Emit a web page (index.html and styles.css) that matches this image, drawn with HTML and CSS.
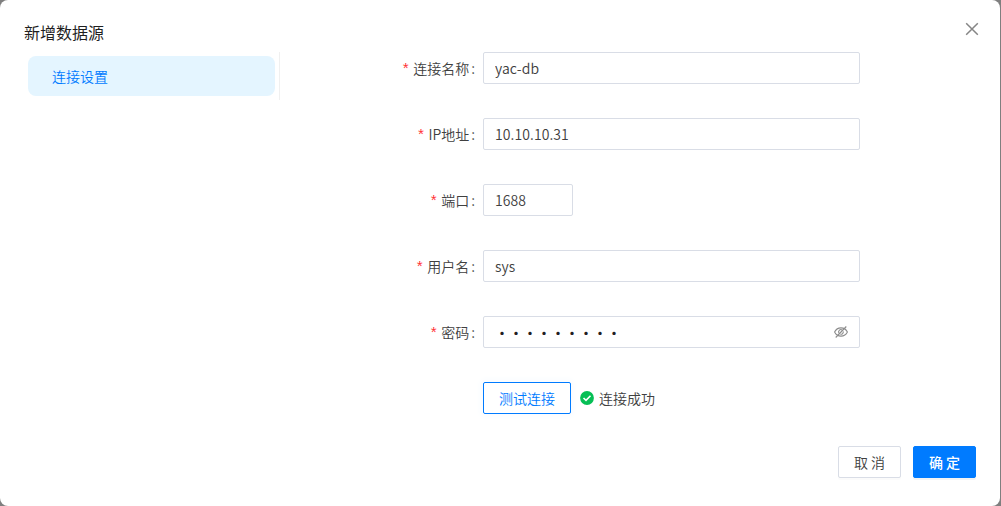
FILE: index.html
```html
<!DOCTYPE html>
<html lang="zh-CN">

<head>
    <meta charset="UTF-8">
    <meta name="viewport" content="width=device-width, initial-scale=1.0">
    <title>新增数据源</title>
    <link rel="stylesheet" href="styles.css">
</head>

<body>
    <div class="modal">
        <div class="header">
            <div class="title">新增数据源</div>
            <svg class="close" viewBox="0 0 14 14">
                <path d="M1.2 1.2l11.6 11.6M12.8 1.2L1.2 12.8" />
            </svg>
        </div>
        <div class="content">
            <div class="side">
                <div class="menu-item">连接设置</div>
            </div>
            <form class="form">
                <div class="row">
                    <label class="label" for="name">连接名称</label>
                    <input class="input" type="text" id="name" value="yac-db">
                </div>
                <div class="row">
                    <label class="label" for="ip">IP地址</label>
                    <input class="input" type="text" id="ip" value="10.10.10.31">
                </div>
                <div class="row">
                    <label class="label" for="port">端口</label>
                    <input class="input port" type="text" id="port" value="1688">
                </div>
                <div class="row">
                    <label class="label" for="user">用户名</label>
                    <input class="input" type="text" id="user" value="sys">
                </div>
                <div class="row">
                    <label class="label">密码</label>
                    <div class="input password">
                        <span class="dots">・・・・・・・・・</span>
                        <svg class="eye" viewBox="0 0 14 14">
                            <path d="M.6 7C3.3 1.500 10.700 1.500 13.400 7C10.700 12.500 3.300 12.500 .600 7z" />
                            <path d="M5 8.200A2.300 2.300 0 0 1 8.200 5M9.200 6.400A2.300 2.300 0 0 1 6.400 9.200" />
                            <path d="M1.700 12.500L12.300 1.500" />
                        </svg>
                    </div>
                </div>
                <div class="test">
                    <button class="btn test-btn" type="button">测试连接</button>
                    <svg class="success" viewBox="0 0 14 14">
                        <circle cx="7" cy="7" r="6.900" />
                        <path d="M3.500 7l2.500 2.400l4.500-4.700" />
                    </svg>
                    <span>连接成功</span>
                </div>
            </form>
        </div>
        <div class="footer">
            <button class="btn" type="button">取 消</button>
            <button class="btn primary" type="button">确 定</button>
        </div>
    </div>
</body>

</html>
```
FILE: styles.css
```css
* {
    box-sizing: border-box;
}
body {
    margin: 0;
    background-color: #7f7f7f;
    color: #404040;
    font-family: "Noto Sans CJK SC", sans-serif;
    font-size: 14px;
    font-weight: 350;
}
.modal {
    width: 1000px;
    height: 506px;
    background-color: white;
    border-radius: 8px;
}
.header {
    display: flex;
    justify-content: space-between;
    height: 52px;
    padding: 20px 21px 0 24px;
}
.title {
    color: #1f1f1f;
    font-size: 16px;
    font-weight: 400;
    line-height: 24px;
}
.close {
    width: 14px;
    height: 14px;
    margin-top: 2px;
    fill: none;
    stroke: #858585;
    stroke-width: 1.5;
}
.content {
    display: flex;
    align-items: flex-start;
    height: 394px;
}
.side {
    width: 280px;
    height: 48px;
    padding: 4px 4px 4px 28px;
    border-right: 1px solid #f0f0f0;
}
.menu-item {
    height: 40px;
    padding-left: 24px;
    border-radius: 8px;
    background-color: #e4f5ff;
    color: #007bff;
    line-height: 40px;
}
.form {
    width: 580px;
}
.row {
    display: flex;
    height: 32px;
    margin-bottom: 34px;
}
.label {
    display: flex;
    justify-content: flex-end;
    width: 203px;
    padding-right: 8px;
    line-height: 32px;
}
.label::before {
    content: "*";
    margin-right: 3px;
    padding-top: 3px;
    color: #ff3336;
    font-family: "Liberation Mono", monospace;
    font-size: 15px;
    font-weight: 400;
}
.label::after {
    content: ":";
    margin-left: 2px;
}
.input {
    width: 377px;
    height: 32px;
    padding: 0 11px;
    border: 1px solid #d9dde6;
    border-radius: 2px;
    outline: none;
    background-color: white;
    color: #404040;
    font: inherit;
    letter-spacing: 0.1px;
}
.port {
    width: 90px;
}
.password {
    display: flex;
    align-items: center;
    justify-content: space-between;
}
.dots {
    padding-bottom: 1px;
    color: #202020;
    font-weight: 500;
    letter-spacing: 0;
}
.eye {
    width: 14px;
    height: 14px;
    fill: none;
    stroke: #8c8c8c;
    stroke-width: 1.1;
}
.test {
    display: flex;
    align-items: center;
    height: 32px;
    padding-left: 203px;
}
.btn {
    width: 63px;
    height: 32px;
    padding: 0;
    border: 1px solid #d9dde6;
    border-radius: 2px;
    background-color: white;
    box-shadow: 0 2px 0 rgba(0, 0, 0, 0.015);
    color: #404040;
    font: inherit;
}
.test-btn {
    width: 88px;
    border-color: #007bff;
    box-shadow: 0 0 6px 3px #f9fcff;
    color: #007bff;
}
.primary {
    border-color: #007bff;
    background-color: #007bff;
    box-shadow: 0 2px 0 rgba(0, 0, 0, 0.045);
    color: white;
    font-weight: 500;
}
.success {
    width: 14px;
    height: 14px;
    margin: 0 5px 0 9px;
}
.success circle {
    fill: #06bf55;
}
.success path {
    fill: none;
    stroke: white;
    stroke-width: 1.6;
}
.footer {
    display: flex;
    justify-content: flex-end;
    gap: 12px;
    padding-right: 24px;
}
```
